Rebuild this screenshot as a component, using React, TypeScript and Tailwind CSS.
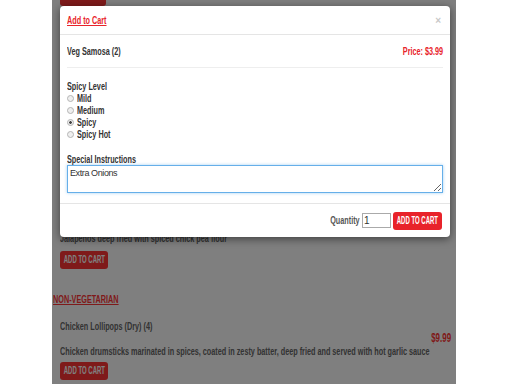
import { useState } from "react";

const font = { fontFamily: '"Liberation Sans", Arial, sans-serif' };

const levels = ["Mild", "Medium", "Spicy", "Spicy Hot"];

// condensed look: the page uses a narrow display face we don't have
function T({
  children,
  className = "",
  right = false,
}: {
  children: React.ReactNode;
  className?: string;
  right?: boolean;
}) {
  return (
    <span
      className={`inline-block whitespace-nowrap scale-x-[0.66] ${right ? "origin-right" : "origin-left"} ${className}`}
    >
      {children}
    </span>
  );
}

function CartButton({ className = "", dim = false }: { className?: string; dim?: boolean }) {
  return (
    <button
      type="button"
      className={`h-[18px] flex items-center justify-center rounded-[3px] ${dim ? "bg-[#ff3434]" : "bg-[#e8232a]"} text-white text-[10px] font-bold leading-none ${className}`}
    >
      <span className="inline-block whitespace-nowrap scale-x-[0.6] origin-center">ADD TO CART</span>
    </button>
  );
}

export default function App() {
  const [level, setLevel] = useState("Spicy");
  const [note, setNote] = useState("Extra Onions");
  const [qty, setQty] = useState("1");

  return (
    <div className="h-[384px] w-[512px] bg-white overflow-hidden text-[#333]" style={font}>
      <div className="relative ml-[52px] w-[404px] h-[384px] overflow-hidden">
        {/* Menu page underneath */}
        <div className="flex flex-col pl-[8px] -mt-[18px] text-[#666]">
          {/* bottom edge of the previous item's button, its label is scrolled away */}
          <div className="self-start w-[46px] h-[24px] rounded-[3px] bg-[#ff3434]" />
          <p className="mt-[226px] h-[12px] text-[11px] font-bold leading-[12px]">
            <T>Jalapenos deep fried with spiced chick pea flour</T>
          </p>
          <CartButton dim className="self-start w-[48px] mt-[7px]" />
          <h3 className="-ml-[7px] mt-[24px] h-[12px] text-[11px] font-bold text-[#ff3434] leading-[12px]">
            <T className="underline">NON-VEGETARIAN</T>
          </h3>
          <div className="mt-[15px] flex flex-col pr-[5px]">
            <span className="h-[12px] text-[11px] font-bold leading-[12px]">
              <T>Chicken Lollipops (Dry) (4)</T>
            </span>
            <span className="self-end h-[12px] text-[12px] font-bold text-[#ff3434] leading-[12px]">
              <T right>$9.99</T>
            </span>
            <p className="mt-[1px] h-[12px] text-[11px] font-bold leading-[12px]">
              <T>Chicken drumsticks marinated in spices, coated in zesty batter, deep fried and served with hot garlic sauce</T>
            </p>
            <CartButton dim className="self-start w-[48px] mt-[5px]" />
          </div>
        </div>

        {/* Backdrop */}
        <div className="absolute inset-0 bg-black/50" />

        {/* Modal */}
        <div className="absolute left-[8px] top-[6px] w-[390px] rounded-[4px] bg-white shadow-[0_2px_8px_rgba(0,0,0,0.5)]">
          <div className="h-[29px] flex items-center justify-between px-[7px] border-b border-[#e5e5e5]">
            <a href="#" className="text-[11px] font-bold text-[#e8232a]">
              <T className="underline">Add to Cart</T>
            </a>
            <span className="text-[10px] font-bold text-[#c8c8c8] pr-[2px]">×</span>
          </div>

          <div className="px-[7px]">
            <div className="h-[33px] flex items-center justify-between border-b border-[#eeeeee]">
              <span className="text-[11px] font-bold">
                <T>Veg Samosa (2)</T>
              </span>
              <span className="text-[11px] font-bold text-[#e8232a]">
                <T right>Price: $3.99</T>
              </span>
            </div>

            <div className="pt-[12px] flex flex-col">
              <span className="h-[12px] text-[11px] font-bold leading-[12px]">
                <T>Spicy Level</T>
              </span>
              {levels.map((l) => (
                <label key={l} className="flex items-center gap-[3px] h-[12px] text-[11px] font-bold leading-[12px]">
                  <input
                    type="radio"
                    name="spice"
                    checked={level === l}
                    onChange={() => setLevel(l)}
                    className="appearance-none shrink-0 m-0 w-[7px] h-[7px] rounded-full border border-[#b5b5b5] bg-[#efefef] checked:bg-[radial-gradient(circle,#444_30%,#efefef_45%)]"
                  />
                  <T>{l}</T>
                </label>
              ))}
            </div>

            <div className="pt-[13px] pb-[10px] flex flex-col">
              <span className="h-[12px] text-[11px] font-bold leading-[12px]">
                <T>Special Instructions</T>
              </span>
              <textarea
                value={note}
                onChange={(e) => setNote(e.target.value)}
                className="h-[28px] w-full border border-[#66afe9] px-[2px] py-[1px] text-[9px] tracking-[-0.4px] leading-[12px] text-[#333] outline-none shadow-[0_0_3px_rgba(102,175,233,0.6)]"
              />
            </div>
          </div>

          <div className="h-[34px] flex items-center justify-end gap-[2px] px-[8px] border-t border-[#e5e5e5]">
            <span className="text-[11px] font-bold text-[#555]">
              <T right>Quantity</T>
            </span>
            <input
              value={qty}
              onChange={(e) => setQty(e.target.value)}
              className="w-[29px] h-[15px] border border-[#aaa] px-[1px] text-[10px] text-[#333] outline-none"
            />
            <CartButton className="w-[49px]" />
          </div>
        </div>
      </div>
    </div>
  );
}
